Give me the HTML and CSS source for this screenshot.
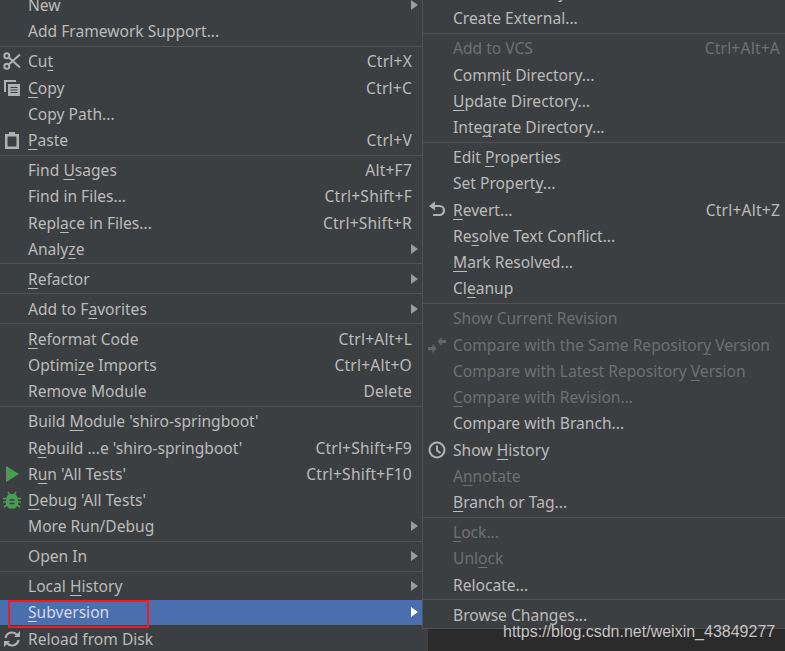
FILE: index.html
```html
<!DOCTYPE html>
<html>
<head>
<meta charset="utf-8">
<title>Subversion menu</title>
<link rel="stylesheet" href="styles.css">
</head>
<body>
<div class="screen">
<div class="menu left">
<div class="row"><span class="label">New</span><i class="arrow"></i></div>
<div class="row"><span class="label">Add Framework Support...</span></div>
<div class="sep"></div>
<div class="row"><svg class="icon" viewBox="0 0 18 18"><g fill="none" stroke="#afb1b3" stroke-width="2"><circle cx="3.800" cy="3.800" r="2.500"/><circle cx="3.800" cy="14.200" r="2.500"/><path d="M5.800 5.500 17 15.500M5.800 12.500 17 2.500"/></g></svg><span class="label">Cu<u>t</u></span><span class="key">Ctrl+X</span></div>
<div class="row"><svg class="icon" viewBox="0 0 18 18"><path fill="#afb1b3" d="M1 1h12v2H3v10H1z"/><path fill="#afb1b3" d="M5 5h12v12H5z"/><path stroke="#3c3f41" stroke-width="1.200" d="M7.500 8.500h7M7.500 11h7M7.500 13.500h7"/></svg><span class="label"><u>C</u>opy</span><span class="key">Ctrl+C</span></div>
<div class="row"><span class="label">Copy Path...</span></div>
<div class="row"><svg class="icon" viewBox="0 0 18 18"><path fill="#afb1b3" d="M2 3h4V1h6v2h4v15H2z"/><path fill="#3c3f41" d="M4.500 5.500h9v10h-9z"/></svg><span class="label"><u>P</u>aste</span><span class="key">Ctrl+V</span></div>
<div class="sep"></div>
<div class="row"><span class="label">Find <u>U</u>sages</span><span class="key">Alt+F7</span></div>
<div class="row"><span class="label">Find in Files...</span><span class="key">Ctrl+Shift+F</span></div>
<div class="row"><span class="label">Repl<u>a</u>ce in Files...</span><span class="key">Ctrl+Shift+R</span></div>
<div class="row"><span class="label">Analy<u>z</u>e</span><i class="arrow"></i></div>
<div class="sep"></div>
<div class="row"><span class="label"><u>R</u>efactor</span><i class="arrow"></i></div>
<div class="sep"></div>
<div class="row"><span class="label">Add to F<u>a</u>vorites</span><i class="arrow"></i></div>
<div class="sep"></div>
<div class="row"><span class="label"><u>R</u>eformat Code</span><span class="key">Ctrl+Alt+L</span></div>
<div class="row"><span class="label">Optimi<u>z</u>e Imports</span><span class="key">Ctrl+Alt+O</span></div>
<div class="row"><span class="label">Remove Module</span><span class="key">Delete</span></div>
<div class="sep"></div>
<div class="row"><span class="label">Build <u>M</u>odule 'shiro-springboot'</span></div>
<div class="row"><span class="label">R<u>e</u>build ...e 'shiro-springboot'</span><span class="key">Ctrl+Shift+F9</span></div>
<div class="row"><svg class="icon" viewBox="0 0 18 18"><path fill="#499c54" d="M3 1 16 9 3 17z"/></svg><span class="label">R<u>u</u>n 'All Tests'</span><span class="key">Ctrl+Shift+F10</span></div>
<div class="row"><svg class="icon" viewBox="0 0 18 18"><path fill="none" stroke="#499c54" stroke-width="1.600" d="M5 1 7 4M13 1 11 4M0 7.500h3M15 7.500h3M0 11h3M15 11h3M1 16l3-2M17 16l-3-2"/><path fill="#499c54" d="M6 3h6l3 3.500V14l-3 3.500H6L3 14V6.500z"/><path stroke="#3c3f41" stroke-width="1.400" d="M6.500 9h5M6.500 12.500h5"/></svg><span class="label"><u>D</u>ebug 'All Tests'</span></div>
<div class="row"><span class="label">More Run/Debug</span><i class="arrow"></i></div>
<div class="sep"></div>
<div class="row"><span class="label">Open In</span><i class="arrow"></i></div>
<div class="sep"></div>
<div class="row"><span class="label">Local <u>H</u>istory</span><i class="arrow"></i></div>
<div class="row selected"><span class="label"><u>S</u>ubversion</span><i class="arrow"></i></div>
<div class="row"><svg class="icon" viewBox="0 0 18 18"><g fill="none" stroke="#afb1b3" stroke-width="2.200"><path d="M2.500 8A6.500 6.500 0 0 1 14 5M15.500 10A6.500 6.500 0 0 1 4 13"/></g><path fill="#afb1b3" d="M17 1v6h-6zM1 17v-6h6z"/></svg><span class="label">Reload from Disk</span></div>
</div>
<div class="side">
<div class="menu right">
<div class="row"><span class="label">Share Directory...</span></div>
<div class="row"><span class="label">Create External...</span></div>
<div class="sep"></div>
<div class="row off"><span class="label">Add to VCS</span><span class="key">Ctrl+Alt+A</span></div>
<div class="row"><span class="label">Comm<u>i</u>t Directory...</span></div>
<div class="row"><span class="label"><u>U</u>pdate Directory...</span></div>
<div class="row"><span class="label">Inte<u>g</u>rate Directory...</span></div>
<div class="sep"></div>
<div class="row"><span class="label">Edit <u>P</u>roperties</span></div>
<div class="row"><span class="label">Set Propert<u>y</u>...</span></div>
<div class="row"><svg class="icon" viewBox="0 0 18 18"><path fill="none" stroke="#afb1b3" stroke-width="2.200" d="M5 5h6.500a4 4 0 0 1 0 9H5"/><path fill="#afb1b3" d="M7 0.500v9L1 5z"/></svg><span class="label"><u>R</u>evert...</span><span class="key">Ctrl+Alt+Z</span></div>
<div class="row"><span class="label">Re<u>s</u>olve Text Conflict...</span></div>
<div class="row"><span class="label"><u>M</u>ark Resolved...</span></div>
<div class="row"><span class="label">Cl<u>e</u>anup</span></div>
<div class="sep"></div>
<div class="row off"><span class="label">Show Current Revision</span></div>
<div class="row off"><svg class="icon" viewBox="0 0 18 18"><path fill="#62666a" d="M0 11h4.500V8l4 4.500-4 4.500v-3H0zM18 7h-4.500v3l-4-4.500 4-4.500v3H18z"/></svg><span class="label">Compare with the Same Repositor<u>y</u> Version</span></div>
<div class="row off"><span class="label">Compare with Latest Repository <u>V</u>ersion</span></div>
<div class="row off"><span class="label"><u>C</u>ompare with Revision...</span></div>
<div class="row"><span class="label">Compare with Branch...</span></div>
<div class="row"><svg class="icon" viewBox="0 0 18 18"><circle cx="9" cy="9" r="7.500" fill="none" stroke="#afb1b3" stroke-width="2"/><path fill="none" stroke="#afb1b3" stroke-width="2" d="M9 4.500V9.500L12.500 12"/></svg><span class="label">Show <u>H</u>istory</span></div>
<div class="row off"><span class="label">A<u>n</u>notate</span></div>
<div class="row"><span class="label"><u>B</u>ranch or Tag...</span></div>
<div class="sep"></div>
<div class="row off"><span class="label"><u>L</u>ock...</span></div>
<div class="row off"><span class="label">Unl<u>o</u>ck</span></div>
<div class="row"><span class="label">Relocate...</span></div>
<div class="sep"></div>
<div class="row"><span class="label">Browse Changes...</span></div>
</div>
<div class="below"></div>
</div>
<div class="mark-box"></div>
<div class="watermark">https://blog.csdn.net/weixin_43849277</div>
</div>
</body>
</html>
```
FILE: styles.css
```css
html, body {
  margin: 0;
  height: 100%;
  overflow: hidden;
  background: #3c3f41;
}
.screen {
  position: relative;
  display: flex;
  width: 785px;
  height: 651px;
  overflow: hidden;
  font: 15.6px/20px "Noto Sans", sans-serif;
  color: #bbbbbb;
}
.menu {
  flex: none;
}
.left {
  width: 422px;
  margin-top: -8px;
}
.side {
  flex: 1;
  display: flex;
  flex-direction: column;
  min-width: 0;
}
.right {
  margin-top: -21px;
  background: #3c3f41;
  border-left: 1px solid #515151;
  border-bottom: 1px solid #515151;
}
.below {
  flex: 1;
  margin-left: 6px;
  background: #2b2b2b;
}
.row {
  position: relative;
  display: flex;
  align-items: center;
  height: 26.25px;
  padding-left: 28px;
  white-space: nowrap;
}
.right .row {
  padding-left: 30px;
  padding-right: 5px;
}
.left .row {
  padding-right: 10px;
}
.row u {
  text-underline-offset: 3px;
  text-decoration-thickness: 1px;
}
.key {
  margin-left: auto;
  letter-spacing: 0.2px;
}
.off {
  color: #6e7071;
}
.selected {
  height: 25px;
  margin-bottom: 1.25px;
  background: #4b6eaf;
  color: #d5dbe6;
}
.icon {
  position: absolute;
  left: 3px;
  top: 4px;
  width: 18px;
  height: 18px;
}
.right .icon {
  left: 5px;
}
.arrow {
  margin-left: auto;
  margin-right: -6px;
  width: 0;
  height: 0;
  border-style: solid;
  border-width: 5px 0 5px 7px;
  border-color: transparent transparent transparent #9a9b9c;
}
.selected .arrow {
  border-left-color: #ffffff;
}
.sep {
  height: 1px;
  margin: 1.25px 0 1.5px;
  background: #515151;
}
.mark-box {
  position: absolute;
  left: 8px;
  top: 600px;
  width: 137px;
  height: 24px;
  border: 2px solid #ee1c25;
}
.watermark {
  position: absolute;
  left: 503px;
  top: 622px;
  font: 16px/20px "Liberation Sans", sans-serif;
  color: #c4c4c4;
}
```
